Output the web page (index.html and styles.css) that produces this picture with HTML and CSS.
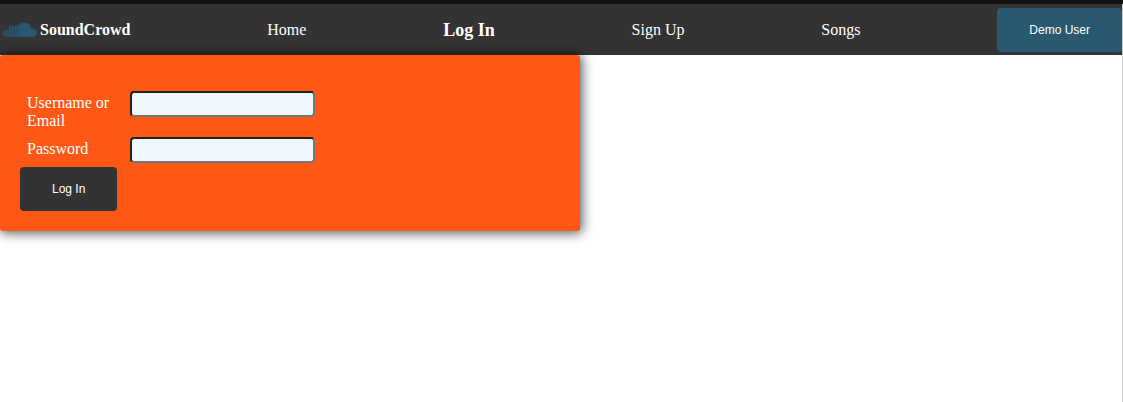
FILE: index.html
```
<!DOCTYPE html>
<html lang="en">
<head>
<meta charset="utf-8">
<title>SoundCrowd</title>
<link rel="stylesheet" href="styles.css">
</head>
<body>
<div class="page">
  <nav class="nav">
    <a class="brand">
      <svg class="logo" width="36" height="16" viewBox="0 0 36 16" aria-hidden="true">
        <g fill="#285971">
          <path d="M18 1.600C19.300.8 20.200.4 21.700.4c4 0 7 2.800 7.500 6.400.5-.2 1-.3 1.600-.3 2.300 0 4.200 1.900 4.200 4.200s-1.900 4.200-4.200 4.200H18z"/>
          <path opacity=".85" d="M7 5Q9 3 11 3.900Q14 3.500 16 3L18 1.600V14.900H7z"/>
          <path opacity=".75" d="M1 9.400Q3 7.800 4.500 8.200L7 6.500V14.900H4.500Q1.500 14 1 13z"/>
        </g>
        <path d="M3.500 7v8M6.500 4v11M9.500 3v12M12.500 2v13M15.500 2v13" stroke="#333" stroke-width=".8" opacity=".45"/>
      </svg>
      <b>SoundCrowd</b>
    </a>
    <a>Home</a>
    <a class="active">Log In</a>
    <a>Sign Up</a>
    <a>Songs</a>
    <button class="btn demo">Demo User</button>
  </nav>
  <form class="card">
    <div class="row tall">
      <label for="user">Username or Email</label>
      <input id="user" type="text">
    </div>
    <div class="row">
      <label for="pass">Password</label>
      <input id="pass" type="password">
    </div>
    <button class="btn" type="button">Log In</button>
  </form>
</div>
</body>
</html>
```
FILE: styles.css
```
* { box-sizing: border-box; }
body {
  margin: 0;
  background: #fff;
  font: 16px/18px "Liberation Serif", "Times New Roman", serif;
}
.page {
  height: 402px;
  border-top: 4px solid #111;
  background: linear-gradient(#c8c8c8, #c8c8c8) right / 1px 100% no-repeat;
  overflow: hidden;
}
.nav {
  display: flex;
  justify-content: space-between;
  align-items: center;
  height: 51px;
  margin-right: 1px;
  background: #333;
  color: #fff;
}
.brand { display: flex; align-items: center; }
.logo { margin: 1px 2px 0; }
.active { font-size: 18px; font-weight: bold; }
.btn {
  display: block;
  height: 44px;
  padding: 0 32px;
  border: 0;
  border-radius: 4px;
  background: #333;
  color: #fff;
  font: 12px "Liberation Sans", Arial, sans-serif;
}
.demo { background: #285971; }
.card {
  width: 580px;
  height: 176px;
  padding: 36px 20px 20px;
  border-radius: 3px;
  background: #ff5714;
  color: #fff;
  box-shadow: 1px 1px 12px 1px #000a;
}
.row { display: flex; height: 30px; padding-left: 7px; }
.tall { height: 46px; }
.row label { width: 103px; padding: 3px 15px 0 0; }
.row input {
  width: 185px;
  height: 26px;
  padding: 4px;
  border: 2px inset #767676;
  border-radius: 4px;
  background: #f0f8ff;
}
```
